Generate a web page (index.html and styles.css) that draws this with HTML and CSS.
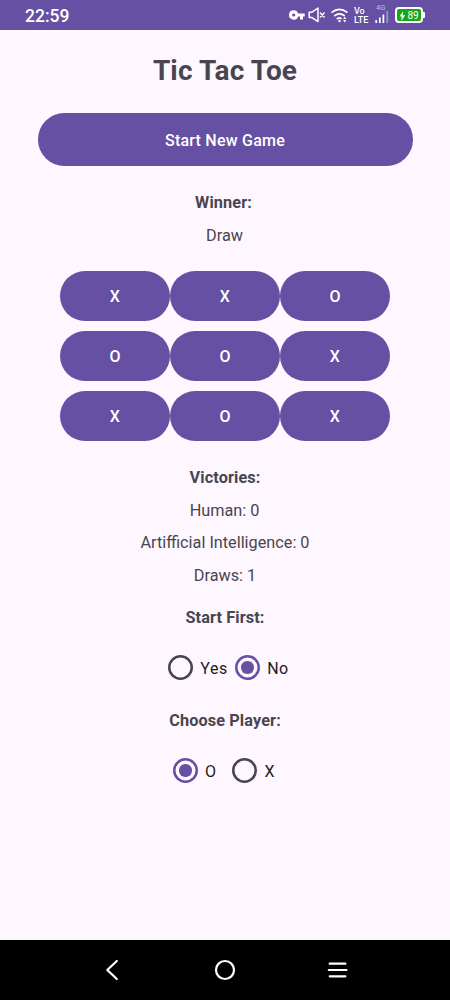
FILE: index.html
```
<!DOCTYPE html>
<html lang="en">
<head>
<meta charset="utf-8">
<title>Tic Tac Toe</title>
<link rel="stylesheet" href="styles.css">
</head>
<body>
<div class="screen">
  <header class="status">
    <span class="clock">22:59</span>
    <div class="indicators">
      <svg class="key" width="16" height="10" viewBox="0 0 16 10"><path fill="#fff" fill-rule="evenodd" d="M4.7 0.3a4.7 4.7 0 1 0 4.4 6.2H11V9.4h3V6.5h1.7V3.4H9.1A4.7 4.7 0 0 0 4.7 .3ZM4.7 3.4a1.6 1.6 0 1 1 0 3.2a1.6 1.6 0 0 1 0-3.2Z"/></svg>
      <svg class="mute" width="18" height="16" viewBox="0 0 18 16" fill="none" stroke="#fff" stroke-width="1.5" stroke-linejoin="round" stroke-linecap="round"><path d="M1.2 5.2H4L10 1v13.6L4 10.6H1.2Z"/><path d="m12.4 6 3.7 4m0-4-3.7 4"/></svg>
      <svg class="wifi" width="18" height="15" viewBox="0 0 18 15" fill="none" stroke="#fff" stroke-width="1.8" stroke-linecap="round"><path d="M1.2 4.2a10.8 10.8 0 0 1 14.6 0M3.8 7.6a7 7 0 0 1 9.4 0M6.4 10.6a3.2 3.2 0 0 1 3.6-.2"/><circle cx="8.5" cy="13" r="1.2" fill="#fff" stroke="none"/><path stroke="none" fill="#fff" d="m12 11 1.7-2.3 1.7 2.3ZM12 12.1l1.7 2.3 1.7-2.3Z"/></svg>
      <span class="volte"><span>Vo</span><span>LTE</span></span>
      <span class="signal">
        <span class="network">4G</span>
        <svg width="15" height="13" viewBox="0 0 15 13" stroke="#fff" stroke-width="1.7"><path d="M1.2 10v3M4.8 7.5V13M8.4 4.5V13"/><path d="M12.3 1v12" opacity=".4"/></svg>
      </span>
      <span class="battery"><svg width="7" height="10" viewBox="0 0 7 10"><path fill="#fff" d="M4.3 0 .5 5.5h2.3L2.2 10l4-5.8H3.7Z"/></svg><span>89</span></span>
    </div>
  </header>
  <main class="content">
    <h1 class="title">Tic Tac Toe</h1>
    <button class="btn start">Start New Game</button>
    <h2 class="line heading winner">Winner:</h2>
    <p class="line result">Draw</p>
    <div class="board">
      <button class="btn">X</button><button class="btn">X</button><button class="btn">O</button>
      <button class="btn">O</button><button class="btn">O</button><button class="btn">X</button>
      <button class="btn">X</button><button class="btn">O</button><button class="btn">X</button>
    </div>
    <h2 class="line heading">Victories:</h2>
    <p class="line result">Human: 0</p>
    <p class="line">Artifficial Intelligence: 0</p>
    <p class="line">Draws: 1</p>
    <h2 class="line heading section">Start First:</h2>
    <div class="options first">
      <span class="option"><i class="radio"></i>Yes</span>
      <span class="option"><i class="radio on"></i>No</span>
    </div>
    <h2 class="line heading">Choose Player:</h2>
    <div class="options player">
      <span class="option"><i class="radio on"></i>O</span>
      <span class="option"><i class="radio"></i>X</span>
    </div>
  </main>
  <nav class="navbar">
    <svg width="24" height="24" viewBox="0 0 24 24"><path d="m15.8 3-9.5 9 9.5 9"/></svg>
    <svg width="24" height="24" viewBox="0 0 24 24"><circle cx="12" cy="12" r="9"/></svg>
    <svg width="24" height="24" viewBox="0 0 24 24"><path d="M3.7 5.7h15.7M2.8 12h17.7M3.7 18.3h15.7"/></svg>
  </nav>
</div>
</body>
</html>
```
FILE: styles.css
```
* { box-sizing: border-box; }
body { margin: 0; font-family: Roboto, sans-serif; color: #49454f; background: #fef7ff; }
h1, h2, p { margin: 0; }
.screen { width: 450px; height: 1000px; display: flex; flex-direction: column; }

.status { height: 30px; flex: none; background: #6550a3; color: #fff; display: flex; align-items: center; justify-content: space-between; padding: 0 26px 0 25px; }
.clock { font-size: 17.5px; font-weight: 500; line-height: 30px; padding-top: 2px; }
.indicators { display: flex; align-items: center; height: 30px; }
.indicators svg { display: block; flex: none; }
.key { margin: 0 3px 0 0; }
.mute { margin-right: 5px; }
.wifi { margin-right: 5px; }
.volte { display: flex; flex-direction: column; width: 17px; font-size: 9px; line-height: 9px; font-weight: 500; margin-right: 4px; padding-top: 1px; }
.signal { display: flex; flex-direction: column; width: 16px; margin: -3px 4px 0 0; }
.network { font-size: 7.5px; line-height: 7px; opacity: .6; padding-left: 1px; }
.signal svg { margin-top: -1px; }
.battery { position: relative; width: 28px; height: 16px; margin-right: 1px; border: 2px solid #fff; border-radius: 4px; background: #18a51c; display: flex; align-items: center; justify-content: center; gap: 1px; font-size: 10px; line-height: 12px; padding-top: 1px; }
.battery::after { content: ""; position: absolute; right: -4px; top: 3px; width: 2px; height: 6px; background: #fff; border-radius: 0 1px 1px 0; }

.content { flex: 1; display: flex; flex-direction: column; align-items: center; padding-top: 21px; }
.title { font-size: 28px; line-height: 40px; font-weight: 700; letter-spacing: .15px; }
.btn { border: 0; padding: 2px 0 0; border-radius: 26.25px; background: #6550a3; color: #fff; font: 500 16px/20px Roboto, sans-serif; letter-spacing: .22px; height: 50px; }
.start { width: 375px; height: 52.5px; margin: 22px 0 21.5px; padding-top: 3px; }
.line { font-size: 16.25px; line-height: 32.5px; font-weight: 400; }
.heading { font-weight: 700; letter-spacing: .12px; }
.winner { padding-right: 3px; }
.result { padding-right: 1px; }
.board { display: grid; grid-template-columns: repeat(3, 110px); row-gap: 10px; margin: 18.5px 0 21.5px; }
.section { margin-top: 10px; }
.options { display: flex; height: 50px; margin: 8px 0 12px; align-items: center; color: #1d1b20; font-size: 16px; letter-spacing: .5px; }
.player { margin-top: 8.5px; }
.option { display: flex; align-items: center; gap: 7px; padding-top: 1px; }
.first { gap: 7.5px; padding-left: 7px; }
.player { gap: 16px; padding-right: 2px; }
.radio { width: 25px; height: 25px; margin-top: -1px; box-shadow: inset 0 0 0 2.5px #49454f; border-radius: 50%; display: grid; place-items: center; }
.radio.on { box-shadow: inset 0 0 0 2.5px #6550a3; }
.radio.on::after { content: ""; width: 12.5px; height: 12.5px; border-radius: 50%; background: #6550a3; }

.navbar { height: 60px; flex: none; background: #000; display: flex; justify-content: space-between; align-items: center; padding: 0 100.5px; }
.navbar svg { fill: none; stroke: #fff; stroke-width: 2.2; stroke-linecap: round; stroke-linejoin: round; }
```
